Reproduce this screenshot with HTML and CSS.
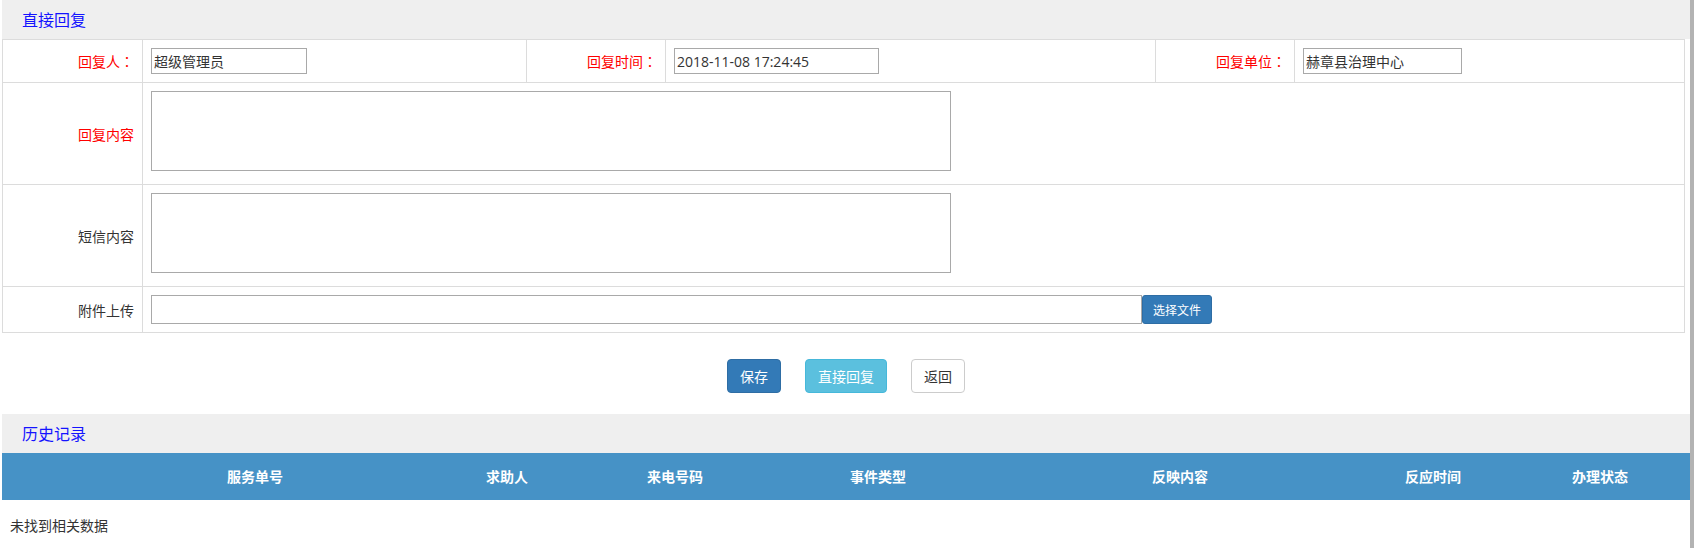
FILE: index.html
```html
<!DOCTYPE html>
<html lang="zh-CN">
<head>
<meta charset="utf-8">
<title>直接回复</title>
<link rel="stylesheet" href="styles.css">
</head>
<body>
<div class="wrap">
  <div class="main">
    <div class="sec-head">直接回复</div>
    <table class="form">
      <colgroup>
        <col class="c1"><col class="c2"><col class="c3"><col class="c4"><col class="c5"><col class="c6">
      </colgroup>
      <tr class="row-top">
        <td class="lbl req">回复人<span class="colon" lang="ja">：</span></td>
        <td><input class="in in-user" type="text" value="超级管理员"></td>
        <td class="lbl req">回复时间<span class="colon" lang="ja">：</span></td>
        <td><input class="in in-time" type="text" value="2018-11-08 17:24:45"></td>
        <td class="lbl req">回复单位<span class="colon" lang="ja">：</span></td>
        <td><input class="in in-unit" type="text" value="赫章县治理中心"></td>
      </tr>
      <tr>
        <td class="lbl req">回复内容</td>
        <td colspan="5"><textarea class="ta"></textarea></td>
      </tr>
      <tr>
        <td class="lbl">短信内容</td>
        <td colspan="5"><textarea class="ta"></textarea></td>
      </tr>
      <tr>
        <td class="lbl">附件上传</td>
        <td colspan="5">
          <div class="file">
            <input class="file-in" type="text">
            <button class="btn btn-primary btn-sm" type="button">选择文件</button>
          </div>
        </td>
      </tr>
    </table>
    <div class="actions">
      <button class="btn btn-primary" type="button">保存</button>
      <button class="btn btn-info" type="button">直接回复</button>
      <button class="btn btn-default" type="button">返回</button>
    </div>
    <div class="sec-head">历史记录</div>
    <div class="grid-head">
      <div class="th"></div>
      <div class="th">服务单号</div>
      <div class="th">求助人</div>
      <div class="th">来电号码</div>
      <div class="th">事件类型</div>
      <div class="th">反映内容</div>
      <div class="th">反应时间</div>
      <div class="th">办理状态</div>
      <div class="th"></div>
    </div>
    <div class="empty">未找到相关数据</div>
  </div>
  <div class="vbar"></div>
</div>
</body>
</html>
```

FILE: styles.css
```css
* { box-sizing: border-box; }
html, body { margin: 0; padding: 0; background: #fff; }
body {
  font-family: "Noto Sans CJK SC", "Noto Sans", sans-serif;
  font-size: 14px;
  color: #333;
  overflow: hidden;
}
.wrap { display: flex; height: 548px; }
.main { width: 1688px; margin-left: 2px; flex: none; }
.vbar { width: 4px; background: #b3b3b3; flex: none; }

.sec-head {
  height: 39px;
  line-height: 39px;
  background: #efefef;
  padding-left: 20px;
  font-size: 16px;
  color: #1414ff;
}

.form {
  width: 1682px;
  table-layout: fixed;
  border-collapse: collapse;
}
.form col.c1 { width: 140px; }
.form col.c2 { width: 384px; }
.form col.c3 { width: 139px; }
.form col.c4 { width: 490px; }
.form col.c5 { width: 139px; }
.form col.c6 { width: 390px; }
.form td {
  border: 1px solid #dcdcdc;
  padding: 8px;
  vertical-align: middle;
  line-height: 20px;
}
.form td.lbl { text-align: right; padding-right: 8px; font-size: 14px; color: #333; }
.form td.req { color: #ff0000; }
.colon { font-family: "Noto Sans CJK JP", "Noto Sans CJK SC", sans-serif; }

.in {
  display: block;
  height: 26px;
  border: 1px solid #a9a9a9;
  padding: 1px 2px;
  font-family: "Open Sans", "Noto Sans CJK SC", sans-serif;
  font-size: 14px;
  color: #333;
  background: #fff;
  outline: none;
}
.in-user { width: 156px; }
.in-time { width: 205px; }
.in-unit { width: 159px; }

.ta {
  display: block;
  width: 800px;
  height: 80px;
  margin-bottom: 5px;
  border: 1px solid #a9a9a9;
  resize: none;
  outline: none;
}

.file { display: flex; align-items: stretch; height: 29px; }
.file-in {
  width: 991px;
  height: 29px;
  border: 1px solid #a9a9a9;
  outline: none;
}

.btn {
  display: inline-block;
  height: 34px;
  padding: 0 12px;
  font-family: "Noto Sans CJK SC", "Noto Sans", sans-serif;
  font-size: 14px;
  line-height: 32px;
  border: 1px solid transparent;
  border-radius: 4px;
  cursor: pointer;
  margin: 0;
}
.btn-primary { background: #337ab7; border-color: #2e6da4; color: #fff; }
.btn-info { background: #5bc0de; border-color: #46b8da; color: #fff; }
.btn-default { background: #fff; border-color: #ccc; color: #333; }
.btn-sm {
  height: 29px;
  width: 70px;
  padding: 0 10px;
  font-size: 12px;
  line-height: 27px;
  border-radius: 3px;
}

.actions {
  display: flex;
  justify-content: center;
  gap: 24px;
  padding: 26px 0 21px;
}

.grid-head {
  display: grid;
  grid-template-columns: 127px 252px 252px 84px 322px 282px 224px 110px 1fr;
  height: 47px;
  background: #4692c6;
}
.th {
  color: #fff;
  font-weight: bold;
  font-size: 14px;
  line-height: 47px;
  text-align: center;
  white-space: nowrap;
}
.empty {
  padding: 15px 8px;
  font-size: 14px;
  color: #333;
}
```
